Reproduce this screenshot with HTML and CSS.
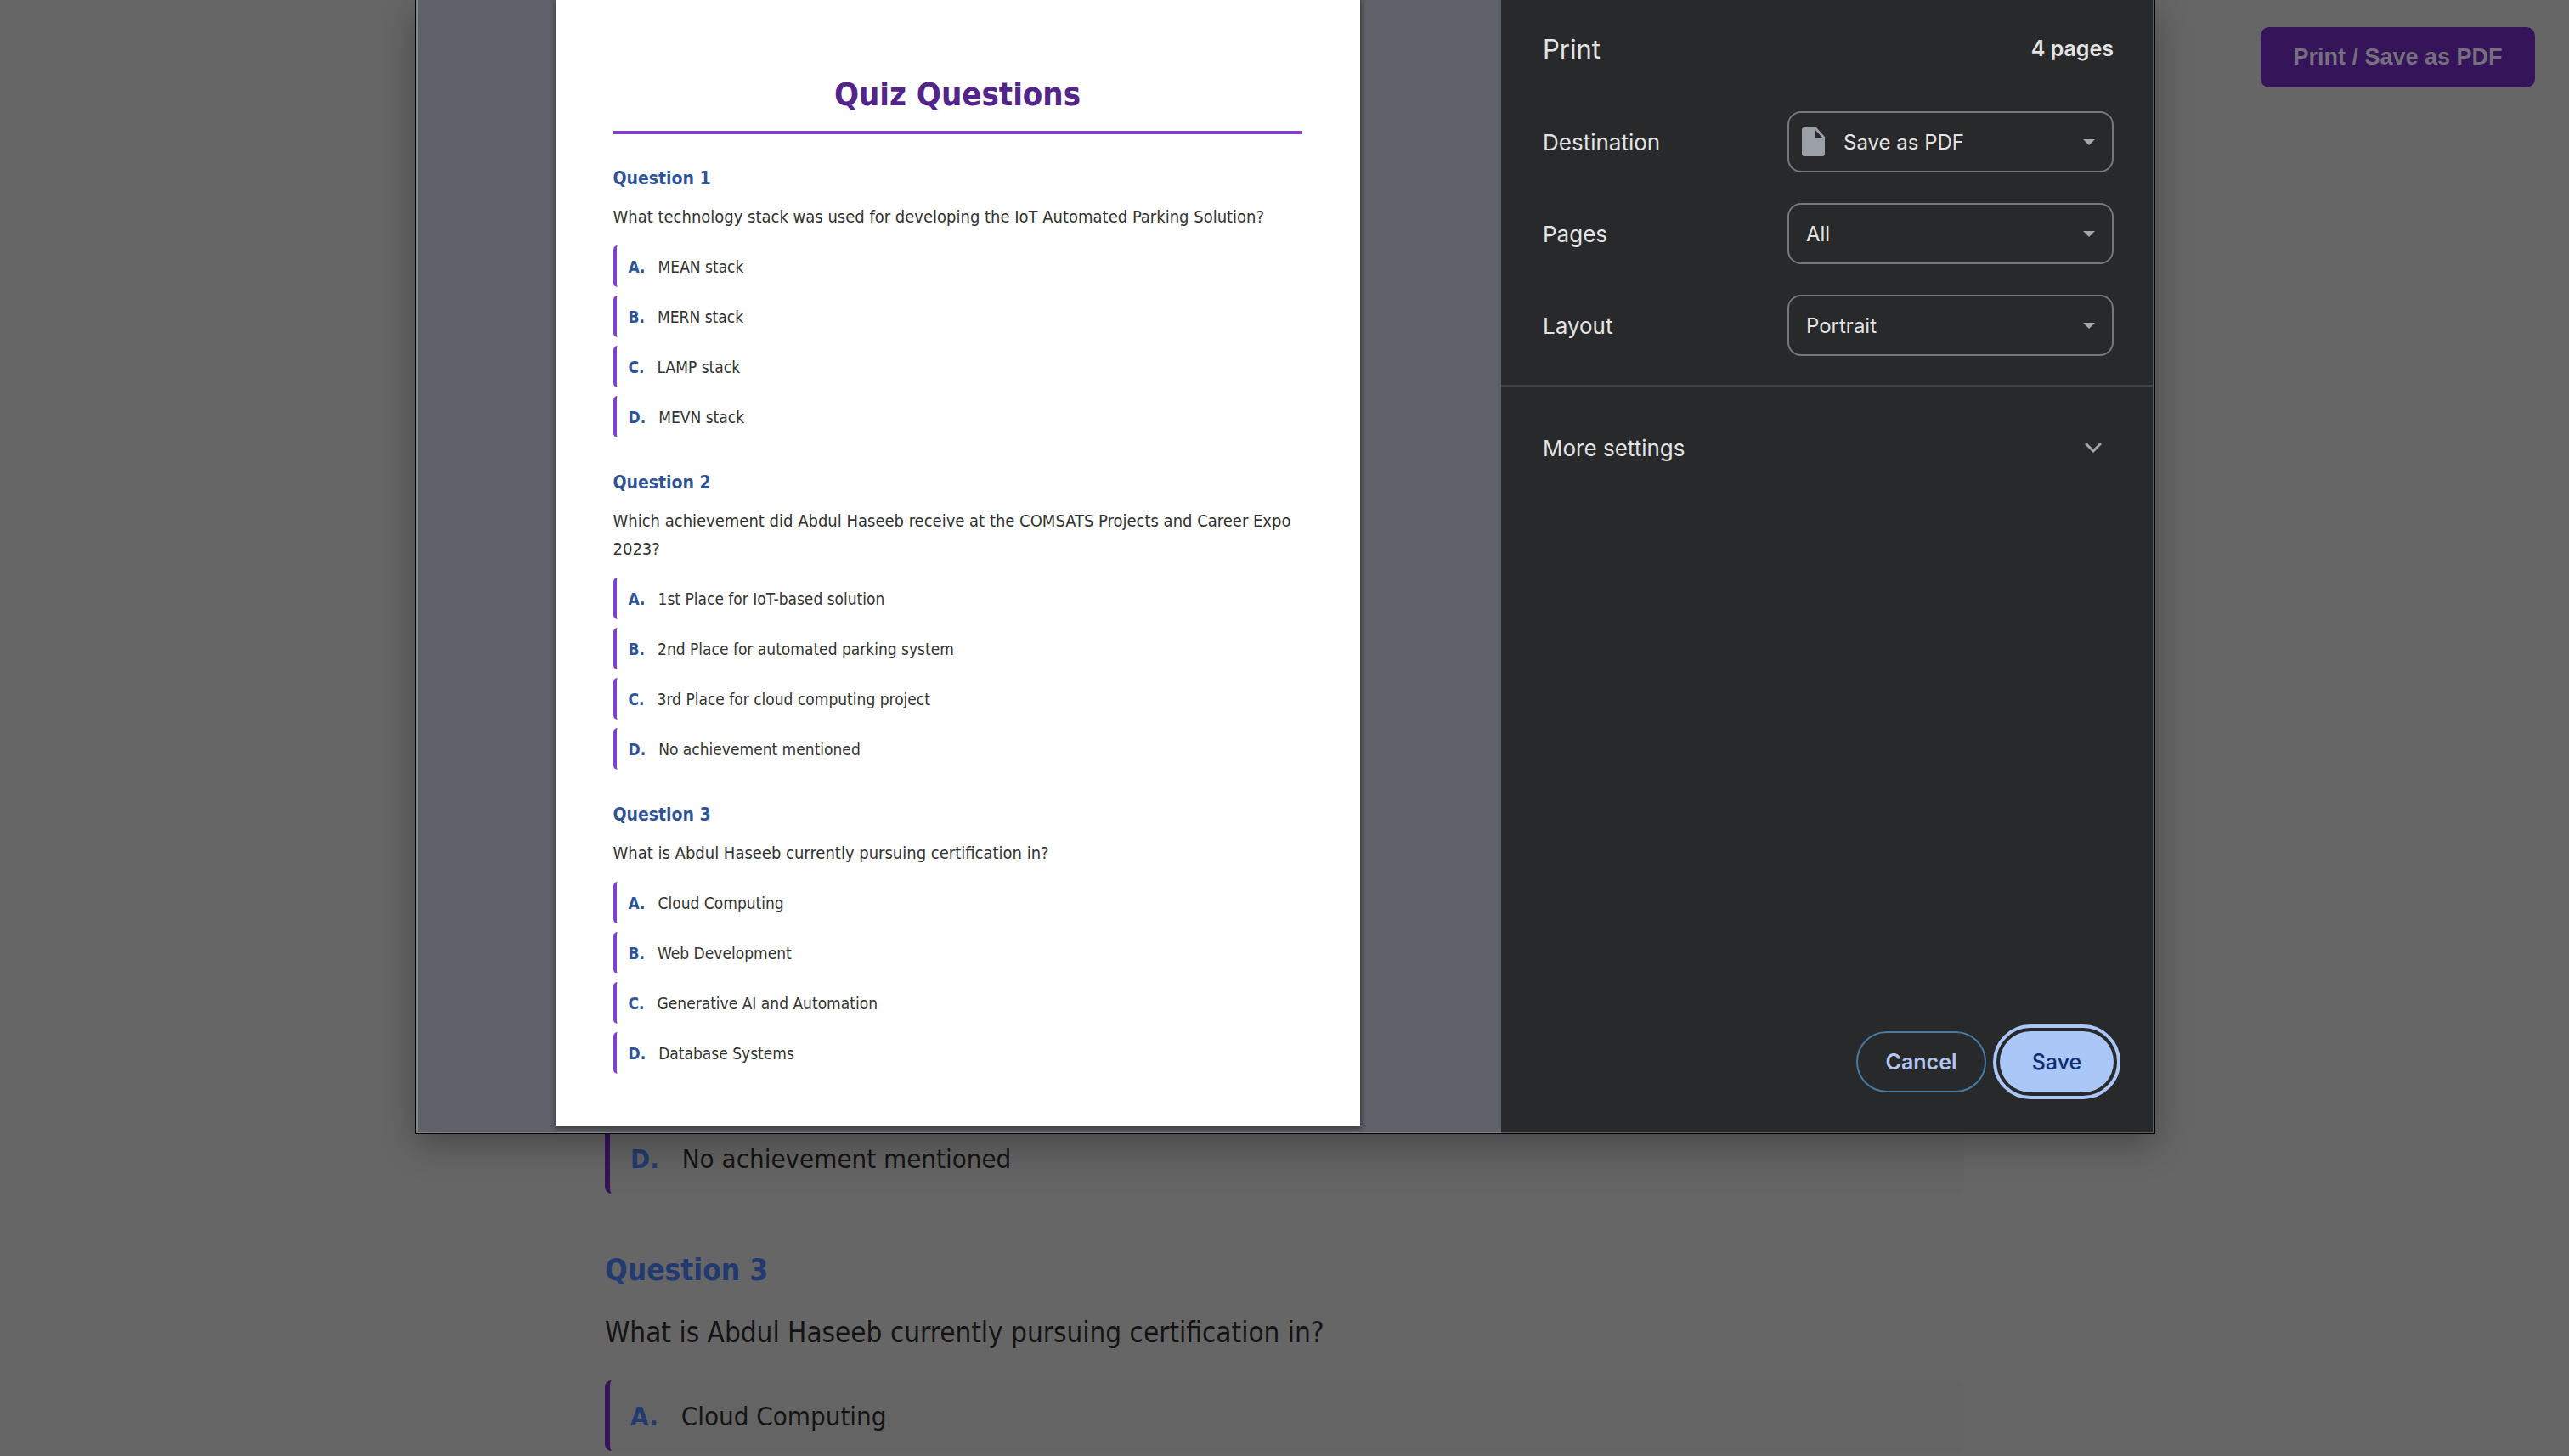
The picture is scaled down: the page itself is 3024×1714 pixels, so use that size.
FILE: index.html
```html
<!DOCTYPE html>
<html lang="en">
<head>
<meta charset="utf-8">
<title>Quiz Questions</title>
<link rel="stylesheet" href="styles.css">
</head>
<body>
<div class="quiz-page">
  <button class="print-button" type="button">Print / Save as PDF</button>
  <main class="quiz">
    <ul class="options">
      <li class="option"><b class="letter">D.</b>No achievement mentioned</li>
    </ul>
    <h2 class="question-title">Question 3</h2>
    <p class="question-text">What is Abdul Haseeb currently pursuing certification in?</p>
    <ul class="options">
      <li class="option"><b class="letter">A.</b>Cloud Computing</li>
    </ul>
  </main>
</div>
<div class="dialog" role="dialog" aria-label="Print">
  <div class="preview">
    <article class="sheet">
      <h1 class="sheet-title">Quiz Questions</h1>
      <section class="sheet-question">
        <h2 class="sheet-heading">Question 1</h2>
        <p class="sheet-text">What technology stack was used for developing the IoT Automated Parking Solution?</p>
        <ul class="sheet-options">
          <li><b class="letter">A.</b>MEAN stack</li>
          <li><b class="letter">B.</b>MERN stack</li>
          <li><b class="letter">C.</b>LAMP stack</li>
          <li><b class="letter">D.</b>MEVN stack</li>
        </ul>
      </section>
      <section class="sheet-question">
        <h2 class="sheet-heading">Question 2</h2>
        <p class="sheet-text">Which achievement did Abdul Haseeb receive at the COMSATS Projects and Career Expo 2023?</p>
        <ul class="sheet-options">
          <li><b class="letter">A.</b>1st Place for IoT-based solution</li>
          <li><b class="letter">B.</b>2nd Place for automated parking system</li>
          <li><b class="letter">C.</b>3rd Place for cloud computing project</li>
          <li><b class="letter">D.</b>No achievement mentioned</li>
        </ul>
      </section>
      <section class="sheet-question">
        <h2 class="sheet-heading">Question 3</h2>
        <p class="sheet-text">What is Abdul Haseeb currently pursuing certification in?</p>
        <ul class="sheet-options">
          <li><b class="letter">A.</b>Cloud Computing</li>
          <li><b class="letter">B.</b>Web Development</li>
          <li><b class="letter">C.</b>Generative AI and Automation</li>
          <li><b class="letter">D.</b>Database Systems</li>
        </ul>
      </section>
    </article>
  </div>
  <form class="settings">
    <header class="settings-header">
      <h2 class="settings-title">Print</h2>
      <span class="page-count">4 pages</span>
    </header>
    <div class="fields">
      <div class="field">
        <label for="destination">Destination</label>
        <div class="select-box">
          <svg class="file-icon" viewBox="0 0 27 34" aria-hidden="true"><path d="M3 0h14l10 11v20a3 3 0 0 1-3 3H3a3 3 0 0 1-3-3V3a3 3 0 0 1 3-3z" fill="#9aa0a6"/><path d="M15 2v10h9z" fill="#28292b"/></svg>
          <select id="destination" class="with-icon"><option>Save as PDF</option></select>
          <svg class="arrow" viewBox="0 0 14 7" aria-hidden="true"><path d="M0 0h14L7 7z"/></svg>
        </div>
      </div>
      <div class="field">
        <label for="pages">Pages</label>
        <div class="select-box">
          <select id="pages"><option>All</option></select>
          <svg class="arrow" viewBox="0 0 14 7" aria-hidden="true"><path d="M0 0h14L7 7z"/></svg>
        </div>
      </div>
      <div class="field">
        <label for="layout">Layout</label>
        <div class="select-box">
          <select id="layout"><option>Portrait</option></select>
          <svg class="arrow" viewBox="0 0 14 7" aria-hidden="true"><path d="M0 0h14L7 7z"/></svg>
        </div>
      </div>
    </div>
    <button class="more-settings" type="button">More settings
      <svg class="chevron" viewBox="0 0 20 12" aria-hidden="true"><path d="M1 1l9 9 9-9"/></svg>
    </button>
    <footer class="actions">
      <button class="cancel" type="button">Cancel</button>
      <button class="save" type="submit">Save</button>
    </footer>
  </form>
</div>
</body>
</html>
```
FILE: styles.css
```css
* {
  box-sizing: border-box;
}

body {
  margin: 0;
  background: #666;
  font-family: Tahoma, "DejaVu Sans Condensed", sans-serif;
}

h1, h2, p, ul {
  margin: 0;
  padding: 0;
}

ul {
  list-style: none;
}

button, select {
  font: inherit;
}

/* Page behind the dialog */
.quiz-page {
  height: 100vh;
  overflow: hidden;
}

.print-button {
  position: absolute;
  top: 32px;
  right: 40px;
  width: 323px;
  height: 71px;
  border: 0;
  border-radius: 10px;
  background: #361459;
  color: #766f7d;
  font: bold 27px "Liberation Sans", sans-serif;
}

.quiz {
  width: 1600px;
  margin: 0 auto;
  padding-top: 1322px;
  color: #141414;
}

.option {
  display: flex;
  align-items: center;
  height: 83px;
  padding-left: 24px;
  border-left: 6px solid #361459;
  border-radius: 8px;
  background: #646464;
  font-size: 31px;
}

.option .letter {
  margin-right: 27px;
  color: #223a70;
}

.question-title {
  margin-top: 62px;
  color: #223a70;
  font-size: 35px;
  line-height: 56px;
}

.question-text {
  margin: 18px 0 28px;
  font-size: 33px;
  line-height: 56px;
}

/* Print dialog */
.dialog {
  position: absolute;
  top: 0;
  left: 489px;
  right: 487px;
  display: flex;
  height: 1335px;
  border: 1px solid #000;
  border-top: 0;
  background: #28292b;
  box-shadow: 0 12px 40px rgba(0, 0, 0, .3);
}

.preview {
  display: flex;
  flex: 0 0 1277px;
  justify-content: center;
  padding-right: 4px;
  border: solid #85878a;
  border-width: 0 0 2px 2px;
  background: #5f6269;
}

.sheet {
  width: 946px;
  height: 1325px;
  padding: 80px 68px 0 67px;
  background: #fff;
  box-shadow: 0 2px 6px 2px rgba(40, 44, 48, .7);
  color: #333;
}

.sheet-title {
  border-bottom: 4px solid #813fcd;
  color: #532489;
  font-size: 38px;
  line-height: 62px;
  padding-bottom: 12px;
  margin-bottom: 36px;
  text-align: center;
}

.sheet-question {
  margin-bottom: 37px;
}

.sheet-heading {
  color: #2f5496;
  font-size: 21px;
  line-height: 33px;
}

.sheet-text {
  margin: 12px 0 17px;
  font-size: 20px;
  line-height: 33px;
}

.sheet-options {
  display: grid;
  gap: 10px;
}

.sheet-options li {
  display: flex;
  align-items: center;
  height: 49px;
  padding-left: 14px;
  border-left: 4px solid #813fcd;
  border-radius: 5px;
  font-size: 19px;
}

.sheet-options .letter {
  margin-right: 15px;
  color: #2f5496;
}

/* Settings column */
.settings {
  display: flex;
  flex: 1;
  flex-direction: column;
  border: solid #5c5d5e;
  border-width: 0 2px 2px 0;
  color: #e3e3e3;
  font: 26px Inter, sans-serif;
}

.settings-header {
  display: flex;
  align-items: center;
  justify-content: space-between;
  height: 114px;
  padding: 0 46px 0 49px;
}

.settings-title {
  font-size: 31px;
  font-weight: 400;
}

.page-count {
  font-size: 25px;
  font-weight: 600;
}

.fields {
  display: grid;
  gap: 36px;
  padding: 17px 46px 34px 49px;
  border-bottom: 2px solid #3f4143;
}

.field {
  display: flex;
  align-items: center;
  justify-content: space-between;
}

.select-box {
  position: relative;
  width: 384px;
}

select {
  display: block;
  width: 100%;
  height: 72px;
  padding: 0 22px 0 20px;
  appearance: none;
  border: 2px solid #757778;
  border-radius: 16px;
  background: transparent;
  color: #e3e3e3;
  font-size: 24px;
}

.with-icon {
  padding-left: 64px;
}

.file-icon {
  position: absolute;
  top: 19px;
  left: 17px;
  width: 27px;
  height: 34px;
}

.arrow {
  position: absolute;
  top: 33px;
  right: 22px;
  width: 14px;
  height: 7px;
  fill: #a4a6a8;
}

.more-settings {
  display: flex;
  align-items: center;
  justify-content: space-between;
  height: 144px;
  padding: 0 60px 0 49px;
  border: 0;
  background: none;
  color: inherit;
}

.chevron {
  width: 20px;
  height: 12px;
  fill: none;
  stroke: #a4a6a8;
  stroke-width: 3;
}

.actions {
  display: flex;
  justify-content: flex-end;
  gap: 16px;
  margin-top: auto;
  padding: 0 46px 46px;
}

.actions button {
  height: 72px;
  border-radius: 36px;
  font-size: 25px;
  font-weight: 600;
}

.actions .cancel {
  width: 153px;
  border: 2px solid #457ba3;
  background: none;
  color: #b4c6f0;
}

.actions .save {
  width: 134px;
  border: 0;
  background: #aac7f8;
  color: #0a2e6e;
  font-weight: 500;
  outline: 4px solid #aac7f8;
  outline-offset: 4px;
}
```
